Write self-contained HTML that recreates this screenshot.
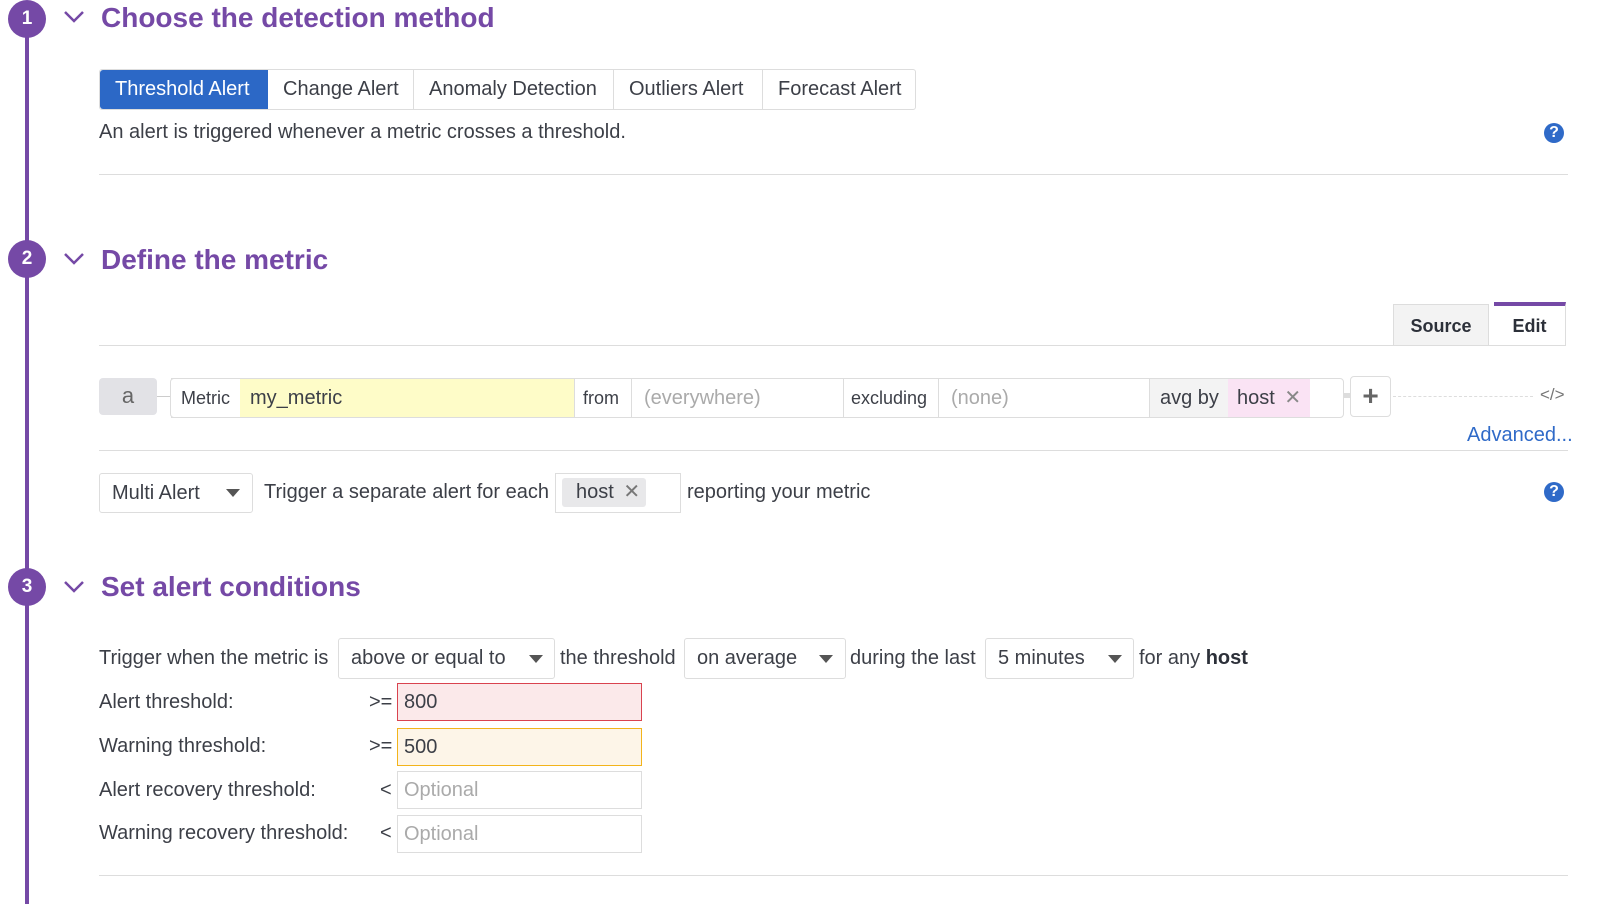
<!DOCTYPE html>
<html><head><meta charset="utf-8"><style>
*{box-sizing:border-box;margin:0;padding:0}
body{width:1613px;height:904px;background:#fff;position:relative;overflow:hidden;font-family:"Liberation Sans","DejaVu Sans",sans-serif;color:#3c3f47;font-size:20px}
.a{position:absolute;white-space:nowrap}
.circ{position:absolute;left:8px;width:38px;height:38px;border-radius:50%;background:#7549a6;color:#fff;font-weight:bold;font-size:19px;text-align:center;line-height:38px}
.h{position:absolute;left:101px;color:#7549a6;font-weight:bold;font-size:28px;line-height:34px}
.chev{position:absolute;left:63px}
.line{position:absolute;left:99px;right:45px;height:1px;background:#ddd}
.box{position:absolute;border:1px solid #ddd;border-radius:3px;background:#fff;line-height:38px;padding-left:12px;white-space:nowrap}
.tri{position:absolute;width:0;height:0;border-left:7px solid transparent;border-right:7px solid transparent;border-top:8px solid #555}
.help{position:absolute;left:1544px;width:20px;height:20px;border-radius:50%;background:#2f6ac8;color:#fff;font-weight:bold;font-size:16px;text-align:center;line-height:20px}
.seg{position:absolute;top:378px;height:40px;line-height:38px;border-top:1px solid #ddd;border-bottom:1px solid #ddd;white-space:nowrap}
.inp{position:absolute;left:397px;width:245px;height:38px;border:1px solid #ddd;line-height:36px;padding-left:6px}
</style></head><body>
<div class="a" style="left:25px;top:20px;width:4px;height:884px;background:#7549a6"></div>
<div class="circ" style="top:0px">1</div>
<div class="circ" style="top:240px">2</div>
<div class="circ" style="top:568px">3</div>
<svg class="chev" style="top:10px" width="22" height="14"><path d="M2 2 L11 11 L20 2" stroke="#7549a6" stroke-width="2.5" fill="none"/></svg>
<svg class="chev" style="top:252px" width="22" height="14"><path d="M2 2 L11 11 L20 2" stroke="#7549a6" stroke-width="2.5" fill="none"/></svg>
<svg class="chev" style="top:580px" width="22" height="14"><path d="M2 2 L11 11 L20 2" stroke="#7549a6" stroke-width="2.5" fill="none"/></svg>
<div class="h" style="top:1px">Choose the detection method</div>
<div class="h" style="top:243px">Define the metric</div>
<div class="h" style="top:570px">Set alert conditions</div>

<div class="a" style="left:99px;top:69px;height:41px;border:1px solid #ddd;border-radius:3px;display:flex;line-height:39px;font-size:20px">
<div style="background:#2c68c6;color:#fff;padding:0 15px;width:168px;border-radius:3px 0 0 3px">Threshold Alert</div>
<div style="padding:0 15px;width:146px;border-right:1px solid #ddd">Change Alert</div>
<div style="padding:0 15px;width:200px;border-right:1px solid #ddd">Anomaly Detection</div>
<div style="padding:0 15px;width:149px;border-right:1px solid #ddd">Outliers Alert</div>
<div style="padding:0 15px;width:152px">Forecast Alert</div>
</div>
<div class="a" style="left:99px;top:121px">An alert is triggered whenever a metric crosses a threshold.</div>
<div class="help" style="top:123px">?</div>
<div class="line" style="top:174px"></div>

<div class="a" style="left:1393px;top:304px;width:96px;height:42px;background:#f3f3f3;border:1px solid #ddd;border-bottom:none;text-align:center;line-height:42px;font-weight:bold;font-size:18px;color:#2c3039">Source</div>
<div class="a" style="left:1494px;top:302px;width:72px;height:44px;background:#fff;border-top:4px solid #7549a6;border-right:1px solid #ddd;text-align:center;line-height:40px;font-weight:bold;font-size:18px;color:#2c3039">Edit</div>
<div class="line" style="top:345px;right:47px"></div>

<div class="a" style="left:99px;top:378px;width:58px;height:37px;background:#e2e2e6;border-radius:4px;text-align:center;line-height:36px;color:#666;font-size:22px">a</div>
<div class="a" style="left:157px;top:396px;width:13px;height:1px;background:#ccc"></div>
<div class="a" style="left:170px;top:378px;width:1174px;height:40px;border:1px solid #ddd;border-radius:4px"></div>
<div class="seg" style="left:171px;width:69px;padding-left:10px;font-size:18px">Metric</div>
<div class="seg" style="left:240px;width:334px;background:#fefcc8;padding-left:10px">my_metric</div>
<div class="seg" style="left:574px;width:57px;border-left:1px solid #ddd;padding-left:8px;font-size:18px">from</div>
<div class="seg" style="left:631px;width:212px;border-left:1px solid #ddd;padding-left:12px;color:#aaa">(everywhere)</div>
<div class="seg" style="left:843px;width:95px;border-left:1px solid #ddd;padding-left:7px;font-size:18px">excluding</div>
<div class="seg" style="left:938px;width:211px;border-left:1px solid #ddd;padding-left:12px;color:#aaa">(none)</div>
<div class="seg" style="left:1149px;width:79px;background:#f3f3f3;border-left:1px solid #ddd;padding-left:10px">avg by</div>
<div class="seg" style="left:1228px;width:82px;background:#fae3f4;padding-left:9px">host <span style="color:#888;margin-left:4px">✕</span></div>
<div class="a" style="left:1344px;top:393px;width:7px;height:5px;background:#ddd"></div>
<div class="a" style="left:1350px;top:376px;width:41px;height:41px;border:1px solid #ddd;border-radius:4px;text-align:center;line-height:38px;font-size:28px;font-weight:bold;color:#666">+</div>
<div class="a" style="left:1393px;top:396px;width:140px;border-top:1px dashed #ddd"></div>
<div class="a" style="left:1540px;top:385px;font-size:17px;color:#777">&lt;/&gt;</div>
<div class="a" style="left:1467px;top:424px;color:#2f6ac8">Advanced...</div>
<div class="line" style="top:450px"></div>

<div class="box" style="left:99px;top:473px;width:154px;height:40px">Multi Alert</div>
<div class="tri" style="left:226px;top:489px"></div>
<div class="a" style="left:264px;top:481px">Trigger a separate alert for each</div>
<div class="a" style="left:555px;top:473px;width:126px;height:40px;border:1px solid #ddd"></div>
<div class="a" style="left:562px;top:478px;width:84px;height:29px;background:#e8e8ea;border-radius:3px;line-height:29px;padding-left:14px">host <span style="color:#777;margin-left:4px">✕</span></div>
<div class="a" style="left:687px;top:481px">reporting your metric</div>
<div class="help" style="top:482px">?</div>

<div class="a" style="left:99px;top:647px">Trigger when the metric is</div>
<div class="box" style="left:338px;top:638px;width:217px;height:41px">above or equal to</div>
<div class="tri" style="left:529px;top:655px"></div>
<div class="a" style="left:560px;top:647px">the threshold</div>
<div class="box" style="left:684px;top:638px;width:162px;height:41px">on average</div>
<div class="tri" style="left:819px;top:655px"></div>
<div class="a" style="left:850px;top:647px">during the last</div>
<div class="box" style="left:985px;top:638px;width:149px;height:41px">5 minutes</div>
<div class="tri" style="left:1108px;top:655px"></div>
<div class="a" style="left:1139px;top:647px">for any <b style="color:#2c3039">host</b></div>

<div class="a" style="left:99px;top:691px">Alert threshold:</div>
<div class="a" style="left:369px;top:691px">&gt;=</div>
<div class="inp" style="top:683px;background:#fbe9ea;border-color:#d9434f">800</div>
<div class="a" style="left:99px;top:735px">Warning threshold:</div>
<div class="a" style="left:369px;top:735px">&gt;=</div>
<div class="inp" style="top:728px;background:#fdf5e8;border-color:#f3b41b">500</div>
<div class="a" style="left:99px;top:779px">Alert recovery threshold:</div>
<div class="a" style="left:380px;top:779px">&lt;</div>
<div class="inp" style="top:771px;color:#aaa">Optional</div>
<div class="a" style="left:99px;top:822px">Warning recovery threshold:</div>
<div class="a" style="left:380px;top:822px">&lt;</div>
<div class="inp" style="top:815px;color:#aaa">Optional</div>
<div class="line" style="top:875px"></div>
</body></html>
